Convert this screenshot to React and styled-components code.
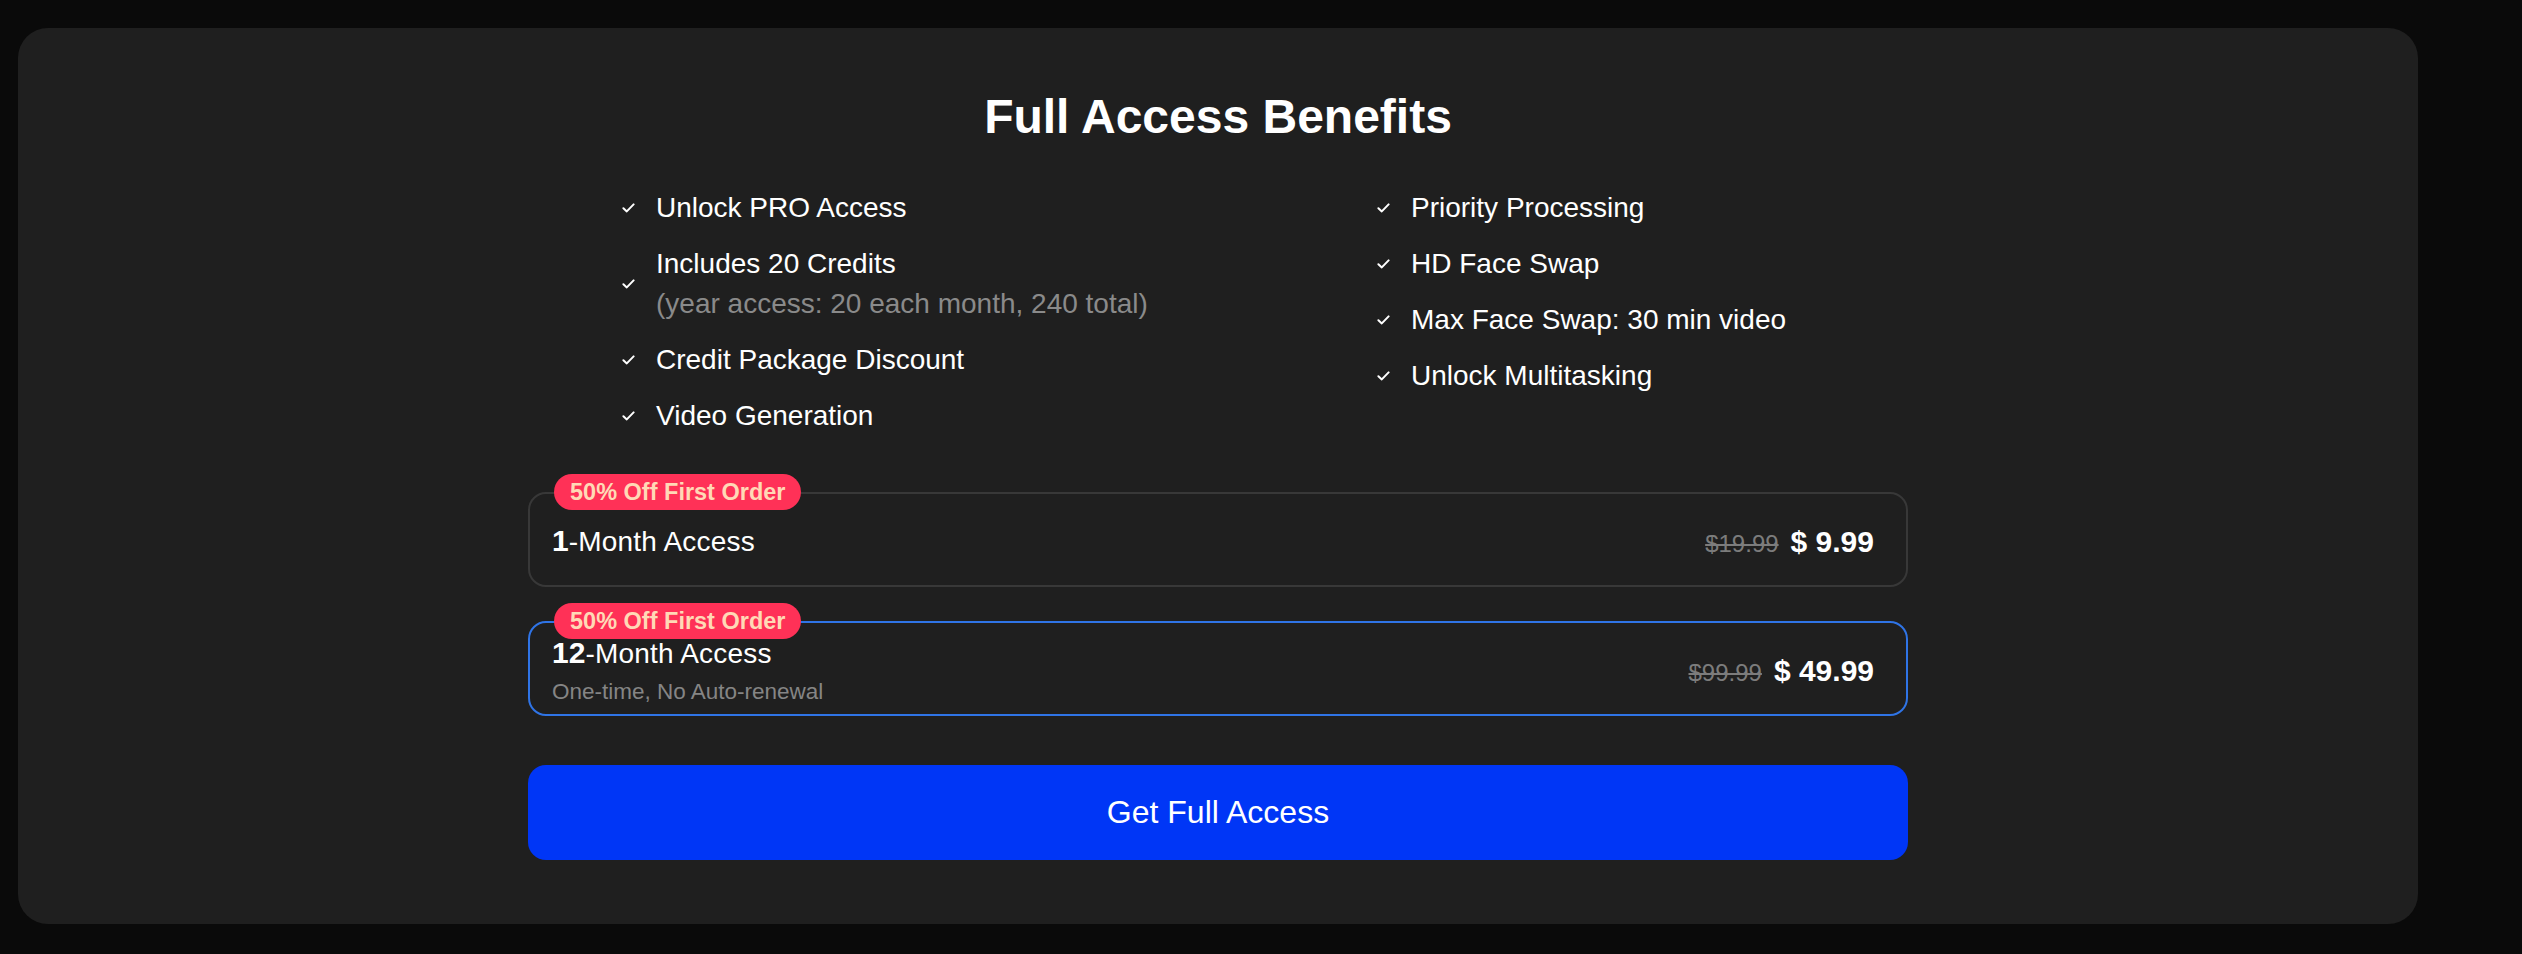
import React from "react";
import styled, { createGlobalStyle } from "styled-components";

const GlobalStyle = createGlobalStyle`
  html, body {
    margin: 0;
    padding: 0;
    background: #0a0a0a;
  }
  body {
    font-family: "Liberation Sans", Arial, Helvetica, sans-serif;
    color: #ffffff;
    -webkit-font-smoothing: antialiased;
  }
  * { box-sizing: border-box; }
`;

const Page = styled.div`
  padding: 28px 0 0 18px;
  min-height: 954px;
`;

const Panel = styled.section`
  width: 2400px;
  background: #1f1f1f;
  border-radius: 30px;
  padding: 61px 0 64px;
`;

const Title = styled.h1`
  margin: 0;
  text-align: center;
  font-size: 48px;
  line-height: 56px;
  font-weight: 700;
  color: #ffffff;
`;

const Content = styled.div`
  width: 1380px;
  margin: 0 auto;
`;

const Benefits = styled.div`
  margin-top: 43px;
  padding-left: 94px;
  display: grid;
  grid-template-columns: 755px 1fr;
  align-items: start;
`;

const BenefitList = styled.ul`
  list-style: none;
  margin: 0;
  padding: 0;
  display: flex;
  flex-direction: column;
  gap: 16px;
`;

const BenefitItem = styled.li`
  display: flex;
  align-items: center;
  gap: 20px;
  font-size: 28px;
  line-height: 40px;
  color: #ffffff;
`;

const CheckBox = styled.span`
  width: 14px;
  flex: none;
  display: flex;
  align-items: center;
  justify-content: flex-start;
`;

const BenefitText = styled.div`
  display: flex;
  flex-direction: column;
`;

const Note = styled.span`
  color: #8a8a8a;
`;

const Plans = styled.div`
  margin-top: 56px;
  display: flex;
  flex-direction: column;
  gap: 34px;
`;

const PlanCard = styled.div`
  position: relative;
  min-height: 95px;
  border: 2px solid ${(p) => (p.$selected ? "#2f74e6" : "#383838")};
  border-radius: 18px;
  background: #1f1f1f;
  padding: 4px 32px 0 22px;
  display: flex;
  align-items: center;
  justify-content: space-between;
`;

const Badge = styled.span`
  position: absolute;
  left: 24px;
  top: -20px;
  height: 36px;
  padding: 0 16px;
  border-radius: 18px;
  background: #ff3157;
  color: #ffd9b6;
  font-size: 23.5px;
  font-weight: 700;
  line-height: 36px;
  white-space: nowrap;
`;

const PlanInfo = styled.div`
  display: flex;
  flex-direction: column;
  gap: 5px;
`;

const PlanName = styled.div`
  font-size: 28px;
  letter-spacing: 0.2px;
  line-height: 36px;
  color: #ffffff;
`;

const PlanNum = styled.b`
  font-size: 30px;
  font-weight: 700;
  letter-spacing: 0;
`;

const PlanNote = styled.div`
  font-size: 22.5px;
  line-height: 30px;
  color: #858585;
`;

const PriceRow = styled.div`
  display: flex;
  align-items: baseline;
  gap: 12px;
`;

const OldPrice = styled.s`
  font-size: 24px;
  color: #7c7c7c;
  text-decoration-thickness: 2px;
`;

const NewPrice = styled.span`
  font-size: 30px;
  font-weight: 700;
  color: #ffffff;
`;

const CTA = styled.button`
  margin-top: 49px;
  width: 100%;
  height: 95px;
  border: none;
  border-radius: 18px;
  background: #0036f6;
  color: #ffffff;
  font-family: inherit;
  font-size: 32px;
  cursor: pointer;
`;

const Check = () => (
  <svg width="13" height="10" viewBox="0 0 13 10" fill="none">
    <path
      d="M1.4 5.2 L4.8 8.4 L11.6 1.4"
      stroke="#ffffff"
      strokeWidth="2"
      strokeLinecap="round"
      strokeLinejoin="round"
    />
  </svg>
);

const Benefit = ({ children, note }) => (
  <BenefitItem>
    <CheckBox>
      <Check />
    </CheckBox>
    <BenefitText>
      <span>{children}</span>
      {note && <Note>{note}</Note>}
    </BenefitText>
  </BenefitItem>
);

const Plan = ({ months, note, oldPrice, price, selected }) => (
  <PlanCard $selected={selected}>
    <Badge>50% Off First Order</Badge>
    <PlanInfo>
      <PlanName>
        <PlanNum>{months}</PlanNum>-Month Access
      </PlanName>
      {note && <PlanNote>{note}</PlanNote>}
    </PlanInfo>
    <PriceRow>
      <OldPrice>{oldPrice}</OldPrice>
      <NewPrice>{price}</NewPrice>
    </PriceRow>
  </PlanCard>
);

export default function App() {
  return (
    <>
      <GlobalStyle />
      <Page>
        <Panel>
          <Title>Full Access Benefits</Title>
          <Content>
            <Benefits>
              <BenefitList>
                <Benefit>Unlock PRO Access</Benefit>
                <Benefit note="(year access: 20 each month, 240 total)">
                  Includes 20 Credits
                </Benefit>
                <Benefit>Credit Package Discount</Benefit>
                <Benefit>Video Generation</Benefit>
              </BenefitList>
              <BenefitList>
                <Benefit>Priority Processing</Benefit>
                <Benefit>HD Face Swap</Benefit>
                <Benefit>Max Face Swap: 30 min video</Benefit>
                <Benefit>Unlock Multitasking</Benefit>
              </BenefitList>
            </Benefits>
            <Plans>
              <Plan months="1" oldPrice="$19.99" price="$ 9.99" />
              <Plan
                months="12"
                note="One-time, No Auto-renewal"
                oldPrice="$99.99"
                price="$ 49.99"
                selected
              />
            </Plans>
            <CTA>Get Full Access</CTA>
          </Content>
        </Panel>
      </Page>
    </>
  );
}
